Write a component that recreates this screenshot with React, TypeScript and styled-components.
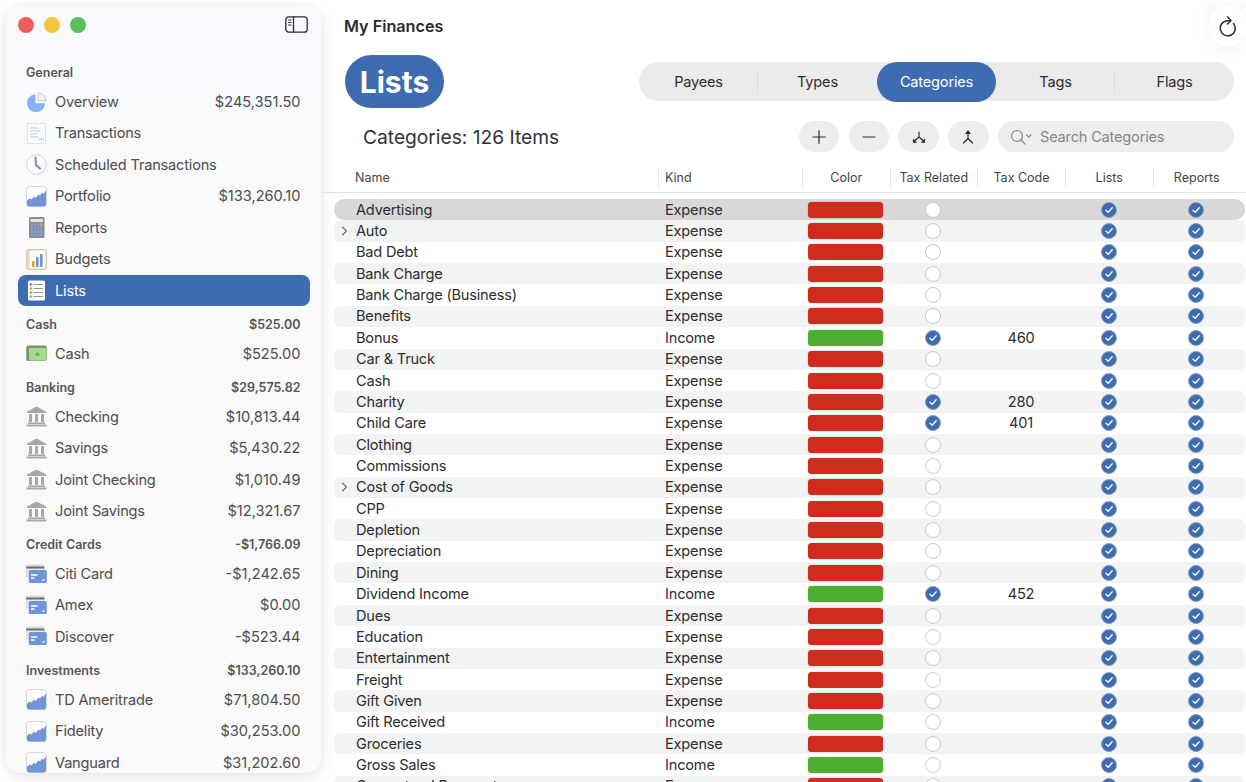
import React from "react";
import styled, { createGlobalStyle } from "styled-components";

const BLUE = "#3d6cb0";
const COLS = "324px 144px 87.5px 87.5px 88px 87.5px 87.5px";

const Global = createGlobalStyle`
  html, body { margin: 0; padding: 0; background: #fff; }
  * { box-sizing: border-box; }
  body { font-family: Inter, "Noto Sans", "Liberation Sans", sans-serif; color: #2c2c2c; }
`;

const Shell = styled.div`
  width: 1246px; height: 782px; display: flex; overflow: hidden; position: relative; background: #fff;
`;
const SideWrap = styled.div`
  padding: 6px 0 9px 6px; flex: 0 0 321px; height: 782px;
`;
const Sidebar = styled.aside`
  width: 315px; height: 767px; border-radius: 16px; overflow: hidden;
  background: linear-gradient(#f8f9fc, #f9f9f9 60%);
  box-shadow: 0 2px 14px rgba(0, 0, 0, 0.13);
  padding: 0 11px 0 12px;
`;
const TopBar = styled.div`
  height: 48.7px; display: flex; align-items: flex-start; padding: 11px 2px 0 0; justify-content: space-between;
`;
const Lights = styled.div`display: flex; gap: 10px; padding-left: 0;`;
const Light = styled.span<{ $c: string }>`
  width: 16px; height: 16px; border-radius: 50%; background: ${p => p.$c};
`;
const SectionHead = styled.div`
  height: 31.6px; padding: 4px 9.5px 0 8px; display: flex; align-items: center; justify-content: space-between;
  font-size: 12.5px; font-weight: 600; color: #555;
`;
const NavRow = styled.div<{ $active?: boolean }>`
  height: 31.45px; padding: 0 9.5px 0 8px; display: flex; align-items: center; gap: 8px;
  font-size: 14.6px; border-radius: 8px; color: ${p => (p.$active ? "#fff" : "#4d4d4d")};
  background: ${p => (p.$active ? BLUE : "transparent")};
`;
const NavLabel = styled.span`flex: 1; white-space: nowrap; letter-spacing: -0.2px;`;
const IconBox = styled.svg`width: 21px; height: 21px; flex: none; display: block;`;

const Main = styled.main`
  flex: 1; min-width: 0; height: 782px; overflow: hidden; display: flex; flex-direction: column;
  & > * { flex: none; }
`;
const TitleRow = styled.div`
  height: 55px; padding: 6px 0 0 23px; display: flex; justify-content: space-between; align-items: flex-start;
`;
const Title = styled.h1`
  margin: 0; font-size: 16.2px; line-height: 40px; height: 40px; font-weight: 600; color: #2b2b2b;
`;
const Refresh = styled.button`
  width: 40px; height: 40px; border: 0; padding: 0; margin-right: -2px; border-radius: 50%; background: #fff;
  box-shadow: 0 0 18px rgba(0, 0, 0, 0.07); display: flex; align-items: center; justify-content: center;
`;
const HeroRow = styled.div`
  height: 53px; padding: 0 12px 0 24px; display: flex; align-items: center; justify-content: space-between;
`;
const Hero = styled.div`
  width: 99px; height: 53px; border-radius: 27px; background: ${BLUE}; color: #fff;
  display: flex; align-items: center; justify-content: center; font-size: 30px; font-weight: 700;
`;
const Tabs = styled.div`
  width: 595px; height: 39px; border-radius: 20px; background: #ebebeb; display: flex; align-items: center;
`;
const Tab = styled.div<{ $active?: boolean; $divider?: boolean }>`
  flex: 1; height: ${p => (p.$active ? "40px" : "39px")}; border-radius: 20px; display: flex; align-items: center; justify-content: center;
  font-size: 14.6px; letter-spacing: -0.2px; position: relative;
  color: ${p => (p.$active ? "#fff" : "#2e2e2e")};
  background: ${p => (p.$active ? BLUE : "transparent")};
  ${p => p.$divider ? `&::after { content: ""; position: absolute; right: 0; top: 9px; height: 21px; width: 1px; background: #dcdcdc; }` : ""}
`;
const ToolRow = styled.div`
  margin-top: 13px; height: 31px; padding: 0 12px 0 42px; display: flex; align-items: center; gap: 9.3px;
`;
const Count = styled.div`
  flex: 1; font-size: 19.2px; color: #333;
`;
const ToolBtn = styled.div`
  width: 40.5px; height: 31px; border-radius: 16px; background: #ededed; display: flex; align-items: center; justify-content: center;
`;
const Search = styled.div`
  width: 236px; height: 31px; border-radius: 16px; background: #ededed; display: flex; align-items: center;
  padding-left: 12px; gap: 8px; font-size: 14.6px; letter-spacing: -0.2px; color: #85868a;
`;
const Header = styled.div`
  margin-top: 12px; height: 29px; padding: 5px 0 0 13px; border-bottom: 1px solid #e3e3e3;
  display: grid; grid-template-columns: ${COLS};
`;
const HeadCell = styled.div<{ $left?: boolean; $first?: boolean; $pad?: number }>`
  height: 18px; line-height: 18px; font-size: 12.5px; color: #444; white-space: nowrap;
  border-left: ${p => (p.$first ? "0" : "1px solid #e4e4e4")};
  text-align: ${p => (p.$left ? "left" : "center")};
  padding-left: ${p => p.$pad ?? 0}px;
`;
const Rows = styled.div`
  padding: 6px 1px 0 13px;
`;
const Row = styled.div<{ $sel?: boolean; $alt?: boolean }>`
  height: 21.37px; display: grid; grid-template-columns: ${COLS}; align-items: center; font-size: 14.6px; letter-spacing: -0.2px; color: #2d2d2d;
  border-radius: ${p => (p.$sel ? "10px" : "6px")};
  background: ${p => (p.$sel ? "#d8d8d8" : p.$alt ? "#f2f3f3" : "transparent")};
`;
const NameCell = styled.div`display: flex; align-items: center; white-space: nowrap;`;
const Disclosure = styled.span`width: 22px; flex: none; display: flex; justify-content: center; padding-right: 2px;`;
const KindCell = styled.div`padding-left: 7px;`;
const Center = styled.div`display: flex; justify-content: center; align-items: center;`;
const Bar = styled.div<{ $income: boolean }>`
  width: 75px; height: 16px; border-radius: 3.5px; background: ${p => (p.$income ? "#4fae31" : "#d02c1e")};
  box-shadow: 0 0 0 0.5px rgba(0, 0, 0, 0.12);
`;
const Empty = styled.span`
  width: 16px; height: 16px; border-radius: 50%; background: #fff; border: 1px solid #c9c9c9; display: block;
`;
const Checked = styled.span`
  width: 16px; height: 16px; border-radius: 50%; background: ${BLUE}; border: 1px solid #8d9db5;
  display: flex; align-items: center; justify-content: center;
`;

const Pie = () => (
  <IconBox viewBox="0 0 21 21">
    <path d="M9.5 2.2A9 9 0 1 0 19 11.2H9.5Z" fill="#8ab2f2" />
    <path d="M12 .8a8 8 0 0 1 8 8h-8Z" fill="#f1f1f1" stroke="#b9b9b9" strokeWidth=".7" />
  </IconBox>
);
const Receipt = () => (
  <IconBox viewBox="0 0 21 21">
    <rect x="1.5" y="0.5" width="18" height="20" fill="#fbfbfb" stroke="#c2c2c2" strokeWidth=".8" strokeDasharray="1 .8" />
    <path d="M4 5h8M4 8h10M4 11h7M4 14h9" stroke="#a9c4ee" strokeWidth=".9" />
    <path d="M13 16.500h5" stroke="#a9c4ee" strokeWidth="1.200" />
  </IconBox>
);
const Clock = () => (
  <IconBox viewBox="0 0 21 21">
    <circle cx="10.500" cy="10.500" r="9.800" fill="#fbfbfb" stroke="#cfcfd4" strokeWidth=".9" />
    <path d="M9.500 3.500 10 11l4 3.500" fill="none" stroke="#6d8fc9" strokeWidth="2" strokeLinecap="round" strokeLinejoin="round" />
  </IconBox>
);
const Chart = () => (
  <IconBox viewBox="0 0 21 21">
    <rect x=".5" y=".5" width="20" height="20" rx="3" fill="#fbfbfb" stroke="#cfcfcf" strokeWidth=".8" />
    <path d="M1 14.500 4 12.500l1.500 1 2.500-3 1.500 1.500 3-3.500 1.500 1 2-3 1.500 1.500L20 4.500V18a2.500 2.500 0 0 1-2.500 2.500h-14A2.500 2.500 0 0 1 1 18Z" fill="#6f95d6" />
  </IconBox>
);
const Calc = () => (
  <IconBox viewBox="0 0 21 21">
    <rect x="3" y="0" width="15.500" height="21" rx="1.500" fill="#8b8b8b" />
    <rect x="4.500" y="2" width="12.500" height="3" fill="#e6e6e6" />
    {[0, 1, 2, 3].map(r => [0, 1, 2, 3].map(c => (
      <rect key={`${r}${c}`} x={4.800 + c * 3.100} y={6.500 + r * 3.400} width="2.400" height="2.600" fill={c === 3 && r === 0 ? "#d9a35a" : "#7fa0d8"} />
    )))}
  </IconBox>
);
const Budget = () => (
  <IconBox viewBox="0 0 21 21">
    <rect x=".5" y=".5" width="20" height="20" rx="2" fill="#e7d5b6" stroke="#c9b692" strokeWidth=".6" />
    <rect x="3.500" y="1.500" width="16" height="18" fill="#fbfaf6" />
    <rect x="6" y="12" width="2.600" height="6" fill="#e0a63a" />
    <rect x="10" y="8" width="2.600" height="10" fill="#6f95d6" />
    <rect x="14" y="5" width="2.600" height="13" fill="#6f95d6" />
  </IconBox>
);
const ListIcon = () => (
  <IconBox viewBox="0 0 21 21">
    <rect x="2" y=".5" width="17" height="20" rx="1.500" fill="#fdfdfd" />
    <path d="M7.500 4.500h9.500M7.500 8.500h9.500M7.500 12.500h9.500M7.500 16.500h9.500" stroke="#8a8a8a" strokeWidth=".9" />
    <circle cx="4.800" cy="4.500" r="1.200" fill="#4d80d8" />
    <circle cx="4.800" cy="8.500" r="1.200" fill="#e98a2f" />
    <circle cx="4.800" cy="12.500" r="1.200" fill="#58b84b" />
    <circle cx="4.800" cy="16.500" r="1.200" fill="#e26aa0" />
  </IconBox>
);
const Bill = () => (
  <IconBox viewBox="0 0 21 21">
    <rect x=".2" y="2.500" width="20.600" height="15.500" rx="2" fill="#7d9079" />
    <rect x="3" y="5" width="17.500" height="12.500" rx="1" fill="#a3dd8c" />
    <circle cx="11.500" cy="11.200" r="2" fill="#62b85a" />
  </IconBox>
);
const Bank = () => (
  <IconBox viewBox="0 0 21 21">
    <path d="M10.500 .5 20 5.500V7H1V5.500Z" fill="#a8a8a8" />
    <path d="M3 8h3v8H3ZM9 8h3v8H9ZM15 8h3v8h-3Z" fill="#a8a8a8" />
    <path d="M2 16.500h17V18H2ZM.500 18.500h20V20.500H.500Z" fill="#a8a8a8" />
  </IconBox>
);
const Card = () => (
  <IconBox viewBox="0 0 21 21">
    <rect x=".2" y="1" width="18" height="12" rx="1.500" fill="#e6e6e6" stroke="#b5b5b5" strokeWidth=".5" />
    <rect x=".2" y="2.500" width="18" height="2" fill="#6d6d6d" />
    <rect x="2.800" y="6" width="18" height="13" rx="1.500" fill="#6f95d6" />
    <path d="M5 11h6.500M5 14h3.500M16.500 16h2" stroke="#fff" strokeWidth="1.300" />
  </IconBox>
);

type Item = { icon: React.ReactNode; label: string; amount?: string; active?: boolean };
type Section = { head: string; total?: string; items: Item[] };

const sections: Section[] = [
  { head: "General", items: [
    { icon: <Pie />, label: "Overview", amount: "$245,351.50" },
    { icon: <Receipt />, label: "Transactions" },
    { icon: <Clock />, label: "Scheduled Transactions" },
    { icon: <Chart />, label: "Portfolio", amount: "$133,260.10" },
    { icon: <Calc />, label: "Reports" },
    { icon: <Budget />, label: "Budgets" },
    { icon: <ListIcon />, label: "Lists", active: true },
  ] },
  { head: "Cash", total: "$525.00", items: [{ icon: <Bill />, label: "Cash", amount: "$525.00" }] },
  { head: "Banking", total: "$29,575.82", items: [
    { icon: <Bank />, label: "Checking", amount: "$10,813.44" },
    { icon: <Bank />, label: "Savings", amount: "$5,430.22" },
    { icon: <Bank />, label: "Joint Checking", amount: "$1,010.49" },
    { icon: <Bank />, label: "Joint Savings", amount: "$12,321.67" },
  ] },
  { head: "Credit Cards", total: "-$1,766.09", items: [
    { icon: <Card />, label: "Citi Card", amount: "-$1,242.65" },
    { icon: <Card />, label: "Amex", amount: "$0.00" },
    { icon: <Card />, label: "Discover", amount: "-$523.44" },
  ] },
  { head: "Investments", total: "$133,260.10", items: [
    { icon: <Chart />, label: "TD Ameritrade", amount: "$71,804.50" },
    { icon: <Chart />, label: "Fidelity", amount: "$30,253.00" },
    { icon: <Chart />, label: "Vanguard", amount: "$31,202.60" },
  ] },
];

type Cat = { name: string; income?: boolean; code?: string; kids?: boolean };
const cats: Cat[] = [
  { name: "Advertising" }, { name: "Auto", kids: true }, { name: "Bad Debt" }, { name: "Bank Charge" },
  { name: "Bank Charge (Business)" }, { name: "Benefits" }, { name: "Bonus", income: true, code: "460" },
  { name: "Car & Truck" }, { name: "Cash" }, { name: "Charity", code: "280" }, { name: "Child Care", code: "401" },
  { name: "Clothing" }, { name: "Commissions" }, { name: "Cost of Goods", kids: true }, { name: "CPP" },
  { name: "Depletion" }, { name: "Depreciation" }, { name: "Dining" },
  { name: "Dividend Income", income: true, code: "452" }, { name: "Dues" }, { name: "Education" },
  { name: "Entertainment" }, { name: "Freight" }, { name: "Gift Given" }, { name: "Gift Received", income: true },
  { name: "Groceries" }, { name: "Gross Sales", income: true }, { name: "Guaranteed Payments" },
];

const Check = () => (
  <Checked>
    <svg width="10" height="10" viewBox="0 0 10 10" fill="none">
      <path d="M2 5.300 4.200 7.300 8.200 2.800" stroke="#fff" strokeWidth="1.300" strokeLinecap="round" strokeLinejoin="round" />
    </svg>
  </Checked>
);

const stroke = { stroke: "#2c2c2c", fill: "none", strokeLinecap: "round" as const, strokeLinejoin: "round" as const };

export default function App() {
  return (
    <>
      <Global />
      <Shell>
        <SideWrap>
          <Sidebar>
            <TopBar>
              <Lights>
                <Light $c="#ee5f5b" />
                <Light $c="#f5c53f" />
                <Light $c="#5cc05a" />
              </Lights>
              <svg width="23" height="17" viewBox="0 0 23 17" {...stroke} strokeWidth="1.300" style={{ marginTop: -1 }}>
                <rect x=".8" y=".8" width="21.400" height="15.400" rx="3" />
                <path d="M8.500 1v15" />
                <path d="M3.500 4h2.500M3.500 6.500h2.500M3.500 9h2.500" strokeWidth="1" />
              </svg>
            </TopBar>
            {sections.map(s => (
              <React.Fragment key={s.head}>
                <SectionHead>
                  <span>{s.head}</span>
                  {s.total && <span>{s.total}</span>}
                </SectionHead>
                {s.items.map(i => (
                  <NavRow key={i.label} $active={i.active}>
                    {i.icon}
                    <NavLabel>{i.label}</NavLabel>
                    {i.amount && <span>{i.amount}</span>}
                  </NavRow>
                ))}
              </React.Fragment>
            ))}
          </Sidebar>
        </SideWrap>
        <Main>
          <TitleRow>
            <Title>My Finances</Title>
            <Refresh aria-label="Refresh">
              <svg width="20" height="22" viewBox="0 0 20 22" {...stroke} strokeWidth="1.500">
                <path d="M15.500 8.500A7.500 7.500 0 1 1 9.500 5.800H12.500" />
                <path d="M9.500 1.800 13 5.500 9.500 9" />
              </svg>
            </Refresh>
          </TitleRow>
          <HeroRow>
            <Hero>Lists</Hero>
            <Tabs>
              <Tab $divider>Payees</Tab>
              <Tab>Types</Tab>
              <Tab $active>Categories</Tab>
              <Tab $divider>Tags</Tab>
              <Tab>Flags</Tab>
            </Tabs>
          </HeroRow>
          <ToolRow>
            <Count>Categories: 126 Items</Count>
            <ToolBtn>
              <svg width="14" height="14" viewBox="0 0 14 14" {...stroke} strokeWidth="1.200"><path d="M7 .8v12.400M.8 7h12.400" /></svg>
            </ToolBtn>
            <ToolBtn>
              <svg width="14" height="14" viewBox="0 0 14 14" {...stroke} strokeWidth="1.200"><path d="M1 7h12" /></svg>
            </ToolBtn>
            <ToolBtn>
              <svg width="14" height="14" viewBox="0 0 14 14" {...stroke} strokeWidth="1.200">
                <path d="M7 2v5M7 7l-4.500 4M7 7l4.500 4" />
                <path d="M1.500 9.500v2.700h2.700M12.500 9.500v2.700H9.800" fill="#2c2c2c" />
              </svg>
            </ToolBtn>
            <ToolBtn>
              <svg width="14" height="14" viewBox="0 0 14 14" {...stroke} strokeWidth="1.200">
                <path d="M7 2v6.500M7 8.500 2.500 13M7 8.500l4.500 4.500" />
                <path d="M5 3.500 7 1l2 2.500Z" fill="#2c2c2c" />
              </svg>
            </ToolBtn>
            <Search>
              <svg width="22" height="16" viewBox="0 0 22 16" fill="none" stroke="#85868a" strokeWidth="1.200" strokeLinecap="round" strokeLinejoin="round">
                <circle cx="7" cy="7" r="5.500" />
                <path d="M11 11l4 4M16.500 6l2.200 2 2.200-2" />
              </svg>
              Search Categories
            </Search>
          </ToolRow>
          <Header>
            <HeadCell $first $left $pad={21}>Name</HeadCell>
            <HeadCell $left $pad={6}>Kind</HeadCell>
            <HeadCell>Color</HeadCell>
            <HeadCell>Tax Related</HeadCell>
            <HeadCell>Tax Code</HeadCell>
            <HeadCell>Lists</HeadCell>
            <HeadCell>Reports</HeadCell>
          </Header>
          <Rows>
            {cats.map((c, i) => (
              <Row key={c.name} $sel={i === 0} $alt={i % 2 === 1}>
                <NameCell>
                  <Disclosure>
                    {c.kids && (
                      <svg width="7" height="10" viewBox="0 0 7 10" fill="none" stroke="#6f6f6f" strokeWidth="1.100" strokeLinecap="round" strokeLinejoin="round">
                        <path d="M1.500 1 5.500 5 1.500 9" />
                      </svg>
                    )}
                  </Disclosure>
                  {c.name}
                </NameCell>
                <KindCell>{c.income ? "Income" : "Expense"}</KindCell>
                <Center><Bar $income={!!c.income} /></Center>
                <Center>{c.code ? <Check /> : <Empty />}</Center>
                <Center>{c.code}</Center>
                <Center><Check /></Center>
                <Center><Check /></Center>
              </Row>
            ))}
          </Rows>
        </Main>
      </Shell>
    </>
  );
}
